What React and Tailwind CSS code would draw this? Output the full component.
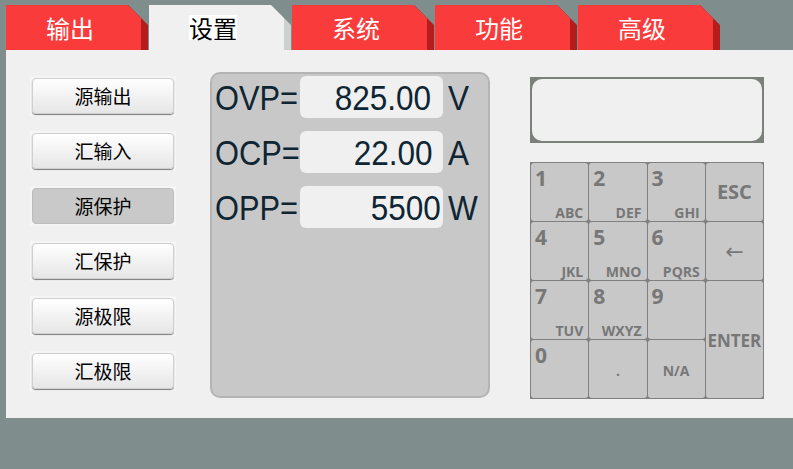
const CJK = { fontFamily: '"Noto Sans CJK SC", "Noto Sans", sans-serif' };
const NARROW = { fontFamily: '"Liberation Sans", Arial, sans-serif' };
const KEYFONT = { fontFamily: '"Open Sans", "DejaVu Sans", sans-serif' };

const TABS = [
  { label: '输出' },
  { label: '设置', active: true },
  { label: '系统' },
  { label: '功能' },
  { label: '高级' },
];

const SIDE = ['源输出', '汇输入', '源保护', '汇保护', '源极限', '汇极限'];

const ROWS = [
  { name: 'OVP=', value: '825.00', unit: 'V', pad: 'pr-[12px]' },
  { name: 'OCP=', value: '22.00', unit: 'A', pad: 'pr-[10px]' },
  { name: 'OPP=', value: '5500', unit: 'W', pad: 'pr-[2px]' },
];

function Tab({ label, active }) {
  return (
    <div
      className={`w-[142px] h-[45px] [clip-path:polygon(0_0,122px_0,142px_20px,142px_100%,0_100%)] ${
        active ? 'bg-[#cdd1cd]' : 'bg-[#b51d1d]'
      }`}
    >
      <div
        style={CJK}
        className={`w-[135px] h-full flex items-center justify-center pr-[7px] text-[24px] [clip-path:polygon(0_0,122px_0,135px_13px,135px_100%,0_100%)] ${
          active ? 'bg-[#f0f0f0] text-black' : 'bg-[#fa3b3b] text-white'
        }`}
      >
        <span className={active ? 'bg-white leading-[25px]' : 'leading-[25px]'}>{label}</span>
      </div>
    </div>
  );
}

function SideButton({ label, selected }) {
  return (
    <div className="w-[146px] h-[40px] p-[2px] bg-[#f5f5f5]">
      <div
        style={CJK}
        className={`h-[36px] rounded-[4px] flex items-center justify-center text-[19px] text-black ${
          selected
            ? 'bg-[#c8c9c8] border border-[#bcbcbc]'
            : 'bg-gradient-to-b from-white to-[#e6e6e6] border border-[#cfcfcf] shadow-[0_1px_1px_#7a7a7a]'
        }`}
      >
        {label}
      </div>
    </div>
  );
}

function Key({ num, letters, children, className = '' }) {
  return (
    <div style={KEYFONT} className={`bg-[#c8c8c8] rounded-[3px] text-[#777777] font-bold ${className}`}>
      {children ? (
        children
      ) : (
        <div className="h-full flex flex-col justify-between pl-[4px] pr-[5px] pt-[5px] pb-[2px]">
          <span className="text-[21px] leading-[20px]">{num}</span>
          <span className="self-end text-[14px] leading-[13px]">{letters}</span>
        </div>
      )}
    </div>
  );
}

export default function App() {
  return (
    <div className="w-[793px] h-[469px] overflow-hidden bg-[#7f8d8c] pt-[5px]">
      <div className="flex gap-[1px] pl-[6px]">
        {TABS.map((t) => (
          <Tab key={t.label} {...t} />
        ))}
      </div>

      <div className="ml-[6px] h-[368px] bg-[#f0f0f0] flex items-start pl-[24px]">
        <div className="mt-[26px] flex flex-col gap-[15px]">
          {SIDE.map((s) => (
            <SideButton key={s} label={s} selected={s === '源保护'} />
          ))}
        </div>

        <div className="ml-[34px] mt-[22px] w-[280px] h-[326px] rounded-[10px] border-2 border-[#b4b4b4] bg-[#c8c8c8] pt-[2px] pl-[3px] flex flex-col gap-[13px]">
          {ROWS.map((r) => (
            <div key={r.name} style={NARROW} className="flex items-center h-[42px] text-[#0e2533]">
              <span className="w-[85px] text-[35px] leading-none">
                <span className="inline-block origin-left scale-x-[0.88]">{r.name}</span>
              </span>
              <div className={`w-[143px] h-[42px] rounded-[6px] bg-[#f0f0f0] flex items-center justify-end text-[35px] leading-none ${r.pad}`}>
                <span className="inline-block origin-right scale-x-[0.9]">{r.value}</span>
              </div>
              <span className="ml-[5px] text-[35px] leading-none">
                <span className="inline-block origin-left scale-x-[0.9]">{r.unit}</span>
              </span>
            </div>
          ))}
        </div>

        <div className="ml-[40px] mt-[27px] flex flex-col">
          <div className="w-[234px] h-[66px] bg-[#7b807b] p-[2px]">
            <div className="w-full h-full rounded-[10px] bg-[#f0f0f0]" />
          </div>

          <div className="mt-[19px] w-[234px] h-[237px] bg-[#808080] p-px grid grid-cols-4 grid-rows-4 gap-px">
            <Key num="1" letters="ABC" />
            <Key num="2" letters="DEF" />
            <Key num="3" letters="GHI" />
            <Key>
              <div className="h-full flex items-center justify-center text-[20px]">ESC</div>
            </Key>
            <Key num="4" letters="JKL" />
            <Key num="5" letters="MNO" />
            <Key num="6" letters="PQRS" />
            <Key>
              <div className="h-full flex items-center justify-center text-[22px] font-normal" style={{ fontFamily: '"DejaVu Sans", sans-serif' }}>
                ←
              </div>
            </Key>
            <Key num="7" letters="TUV" />
            <Key num="8" letters="WXYZ" />
            <Key num="9" letters="" />
            <Key className="row-span-2">
              <div className="h-full flex items-center justify-center text-[17px] pt-[3px]">ENTER</div>
            </Key>
            <Key num="0" letters="" />
            <Key>
              <div className="h-full flex items-center justify-center text-[14px] pt-[2px]">.</div>
            </Key>
            <Key>
              <div className="h-full flex items-center justify-center text-[14px] pt-[3px]">N/A</div>
            </Key>
          </div>
        </div>
      </div>
    </div>
  );
}
